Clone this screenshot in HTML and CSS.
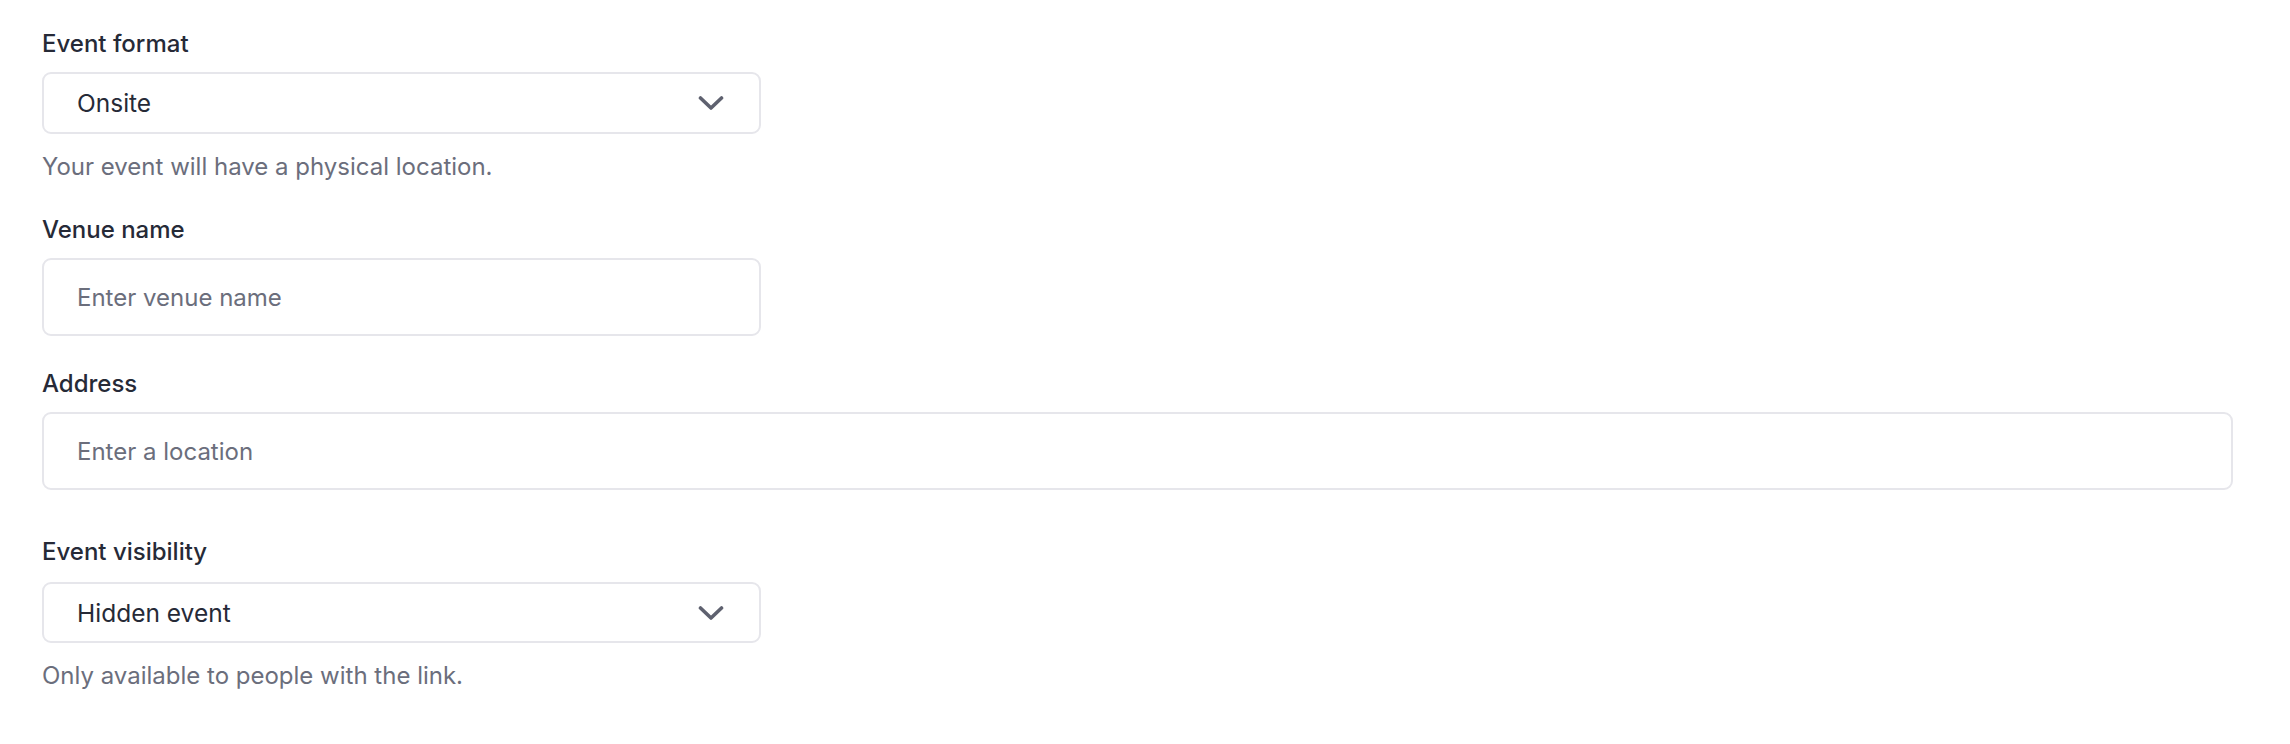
FILE: index.html
```html
<!DOCTYPE html>
<html lang="en">
<head>
    <meta charset="UTF-8">
    <title>Event settings</title>
    <link rel="stylesheet" href="styles.css">
</head>
<body>
<form class="form">
    <div class="field">
        <label class="field-label">Event format</label>
        <div class="select">
            <span class="select-value">Onsite</span>
            <svg class="chevron" width="26" height="16" viewBox="0 0 26 16">
                <path d="M2.5 3 L13 13 L23.5 3" fill="none" stroke="currentColor" stroke-width="3.6" stroke-linecap="round" stroke-linejoin="round"/>
            </svg>
        </div>
        <p class="field-help">Your event will have a physical location.</p>
    </div>

    <div class="field">
        <label class="field-label">Venue name</label>
        <div class="input input-half">
            <span class="placeholder">Enter venue name</span>
        </div>
    </div>

    <div class="field field-wide">
        <label class="field-label">Address</label>
        <div class="input input-full">
            <span class="placeholder">Enter a location</span>
        </div>
    </div>

    <div class="field field-section">
        <label class="field-label label-tight">Event visibility</label>
        <div class="select select-last">
            <span class="select-value">Hidden event</span>
            <svg class="chevron" width="26" height="16" viewBox="0 0 26 16">
                <path d="M2.5 3 L13 13 L23.5 3" fill="none" stroke="currentColor" stroke-width="3.6" stroke-linecap="round" stroke-linejoin="round"/>
            </svg>
        </div>
        <p class="field-help">Only available to people with the link.</p>
    </div>
</form>
</body>
</html>
```

FILE: styles.css
```css
* {
    margin: 0;
    padding: 0;
    box-sizing: border-box;
}
body {
    background: #fff;
    font-family: Inter, "Noto Sans", sans-serif;
    color: #262a37;
}
.form {
    display: flex;
    flex-direction: column;
    padding: 26px 57px 0 42px;
}
.field {
    display: flex;
    flex-direction: column;
    align-items: flex-start;
}
.field + .field {
    margin-top: 27px;
}
.field + .field-wide {
    margin-top: 30px;
}
.field.field-section {
    margin-top: 44px;
}
.field-label {
    font-size: 24px;
    line-height: 36px;
    font-weight: 500;
    color: #262a37;
    margin-bottom: 10px;
}
.label-tight {
    margin-bottom: 12px;
}
.select,
.input {
    display: flex;
    align-items: center;
    border: 2px solid #e6e6eb;
    border-radius: 9px;
    background: #fff;
    padding: 0 35px 0 33px;
}
.select {
    width: 719px;
    height: 62px;
    justify-content: space-between;
}
.select-last {
    height: 61px;
}
.select-value {
    font-size: 24.5px;
    color: #262a37;
}
.chevron {
    color: #5e616f;
}
.input {
    height: 78px;
}
.input-half {
    width: 719px;
}
.input-full {
    width: 100%;
}
.placeholder {
    font-size: 24px;
    color: #6b6e7c;
}
.field-help {
    margin-top: 15px;
    font-size: 24px;
    line-height: 36px;
    color: #6b6e7c;
}
```
